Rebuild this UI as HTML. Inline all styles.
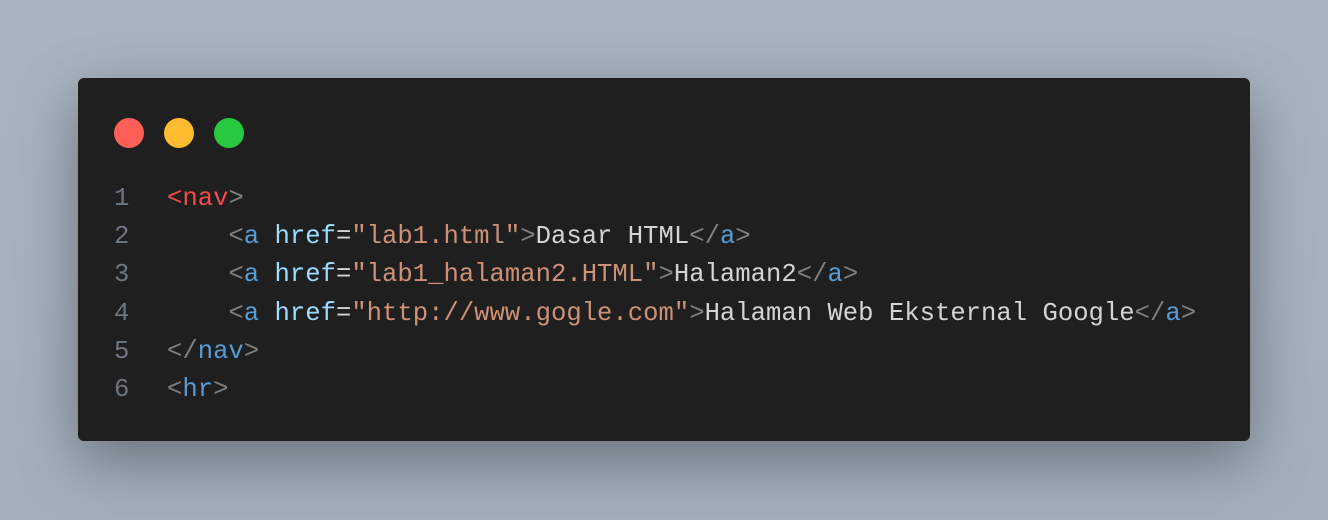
<!DOCTYPE html>
<html><head><style>
html,body{margin:0;padding:0}
body{width:1328px;height:520px;background:linear-gradient(180deg,#a9b4bf,#a3afbb);position:relative;overflow:hidden}
.card{position:absolute;left:78px;top:78px;width:1172px;height:363px;background:#1f1f1f;border-radius:6px;box-shadow:0 20px 60px rgba(0,0,0,.35)}
.dot{position:absolute;top:40px;width:30px;height:30px;border-radius:50%}
.code{position:absolute;left:0;top:102px;font-family:"Liberation Mono",monospace;font-size:25.6px;line-height:38.2px;color:#d4d4d4}
.ln,.tx{position:absolute;top:0;white-space:pre}
.ln{left:36px;color:#6e7681;}
.tx{left:89px}
.r{color:#f14c4c}.g{color:#808080}.b{color:#569cd6}.at{color:#9cdcfe}.s{color:#ce9178}
</style></head><body>
<div class="card">
<div class="dot" style="left:36px;background:#ff5f57"></div>
<div class="dot" style="left:86px;background:#febc2e"></div>
<div class="dot" style="left:136px;background:#28c840"></div>
<div class="code"><div class="ln">1
2
3
4
5
6</div><div class="tx"><span class="r">&lt;nav</span><span class="g">&gt;</span>
    <span class="g">&lt;</span><span class="b">a</span> <span class="at">href</span>=<span class="s">"lab1.html"</span><span class="g">&gt;</span>Dasar HTML<span class="g">&lt;/</span><span class="b">a</span><span class="g">&gt;</span>
    <span class="g">&lt;</span><span class="b">a</span> <span class="at">href</span>=<span class="s">"lab1_halaman2.HTML"</span><span class="g">&gt;</span>Halaman2<span class="g">&lt;/</span><span class="b">a</span><span class="g">&gt;</span>
    <span class="g">&lt;</span><span class="b">a</span> <span class="at">href</span>=<span class="s">"http://www.gogle.com"</span><span class="g">&gt;</span>Halaman Web Eksternal Google<span class="g">&lt;/</span><span class="b">a</span><span class="g">&gt;</span>
<span class="g">&lt;/</span><span class="b">nav</span><span class="g">&gt;</span>
<span class="g">&lt;</span><span class="b">hr</span><span class="g">&gt;</span></div></div>
</div>
</body></html>
